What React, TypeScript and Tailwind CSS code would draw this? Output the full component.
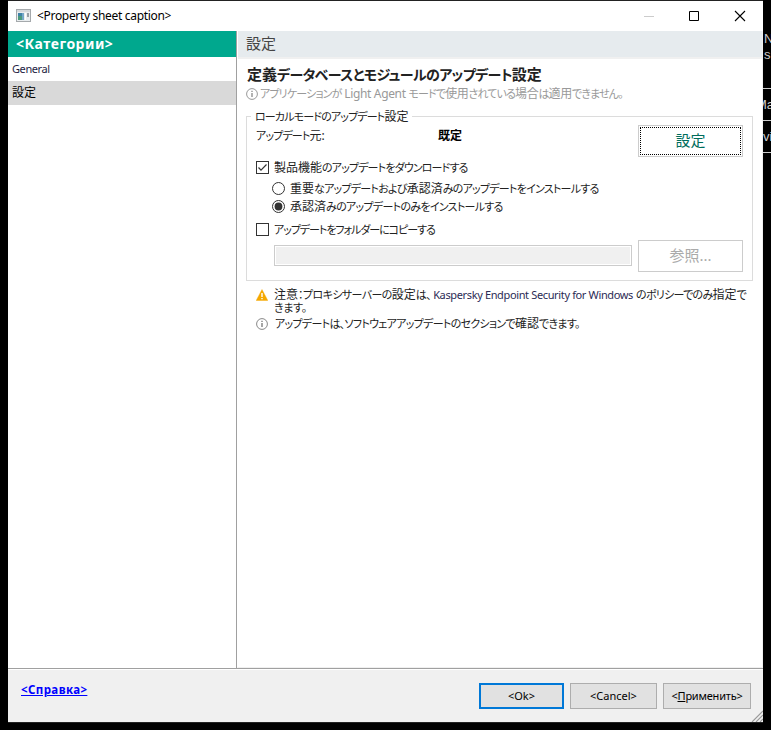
import React from 'react';
import clsx from 'clsx';

const InfoIcon: React.FC<{ className?: string }> = ({ className }) => (
  <svg className={clsx('h-3 w-3 shrink-0', className)} viewBox="0 0 12 12" fill="none">
    <circle cx="6" cy="6" r="5.4" stroke="currentColor" strokeWidth="1" />
    <path d="M5.25 5h1.5v4h-1.5zM5.25 2.8h1.5v1.3h-1.5z" fill="currentColor" />
  </svg>
);

const WarningIcon = () => (
  <svg className="h-3 w-3 shrink-0" viewBox="0 0 12 12">
    <path d="M6 .5 11.8 11.5H.2z" fill="#f5a800" stroke="#f5a800" strokeWidth=".4" strokeLinejoin="round" />
    <path d="M5.3 4h1.4v4H5.3zM5.3 8.9h1.4v1.3H5.3z" fill="#fff" />
  </svg>
);

const AppIcon = () => (
  <svg className="-mt-px h-[13px] w-[15px]" viewBox="0 0 15 13" shapeRendering="crispEdges">
    <path d="M0 0h15v13H0z" fill="#a5a9ac" />
    <path d="M1 1h13v11H1z" fill="#e9edef" />
    <path d="M1 1h13v2H1z" fill="#d5d9dc" />
    <path d="M2 4h6v7H2z" fill="#3f83a8" />
    <path d="M2 7h5v4H2z" fill="#4b9a7c" />
    <path d="M6 4h2v7H6z" fill="#74a8c8" />
    <path d="M9 4h1v7H9z" fill="#fff" />
    <path d="M11 4h2v4h-2z" fill="#98a0a6" />
  </svg>
);

// Kana is set proportionally and tight, kanji and latin keep their own advance.
const Ja: React.FC<{ children: string; className?: string; otherClassName?: string }> = ({
  children,
  className = 'text-[11px] tracking-[-0.85px]',
  otherClassName = 'tracking-normal',
}) => (
  <>
    {children.split(/([\u3000-\u30ff：]+)/).map((run, i) => (
      <span key={i} className={i % 2 ? clsx("[font-feature-settings:'palt']", className) : otherClassName}>
        {run}
      </span>
    ))}
  </>
);

interface OptionProps {
  type: 'checkbox' | 'radio';
  checked?: boolean;
  label: string;
  className?: string;
  textClassName?: string;
}

const Option: React.FC<OptionProps> = ({ type, checked, label, className, textClassName }) => (
  <div className={clsx('flex h-[18px] items-center', className)}>
    <svg className="-mt-px h-[13px] w-[13px] shrink-0" viewBox="0 0 13 13" fill="none" stroke="#333">
      {type === 'checkbox' ? (
        <>
          <rect x=".5" y=".5" width="12" height="12" />
          {checked && <path d="M2.5 6.5 5 9.2l5.5-5.7" strokeWidth="1.2" />}
        </>
      ) : (
        <>
          <circle cx="6.5" cy="6.5" r="6" />
          {checked && <circle cx="6.5" cy="6.5" r="3.9" fill="#333" stroke="none" />}
        </>
      )}
    </svg>
    <span className="ml-[5px] whitespace-nowrap">
      <Ja className={textClassName}>{label}</Ja>
    </span>
  </div>
);

const TitleBar = () => (
  <div className="flex h-[30px] items-center bg-white pl-2">
    <AppIcon />
    <span className="ml-[6px] text-[12px] tracking-[-0.32px] text-black">&lt;Property sheet caption&gt;</span>
    <svg className="mr-[16px] ml-auto h-3 w-[104px]" viewBox="0 0 104 12" fill="none">
      <path d="M1 6.5h10" stroke="#ccc" />
      <path d="M46.5 1.5h9v9h-9z" stroke="#000" />
      <path d="m92 1 10 10M102 1 92 11" stroke="#000" strokeWidth="1.1" />
    </svg>
  </div>
);

const Sidebar = () => (
  <div className="w-[229px] shrink-0 border-r border-[#a0a0a0] bg-white">
    <div className="flex h-[26px] items-center bg-[#00a88e] pb-px pl-2 text-[14px] font-bold tracking-[0.5px] text-white">
      &lt;Категории&gt;
    </div>
    <div className="flex h-6 items-center pl-1 text-[11px] tracking-[-0.4px] text-[#1d1d42]">General</div>
    <div className="flex h-6 items-center bg-[#d9d9d9] pl-1 text-[12px] text-black">設定</div>
  </div>
);

const SettingsPage = () => (
  <div className="flex min-w-0 flex-1 flex-col border-r border-b border-l border-[#f0f0f0] border-l-white bg-white text-[12px] text-[#222]">
    <div className="flex h-7 items-center border-b-2 border-[#f0f0f0] bg-[#e6ebee] pb-px pl-2 text-[15px] text-[#444]">
      設定
    </div>

    <h1 className="mt-[5px] mb-px ml-[9px] h-5 text-[15px] leading-5 font-semibold whitespace-nowrap">
      <Ja className="text-[14px] tracking-[-0.6px]">定義データベースとモジュールのアップデート設定</Ja>
    </h1>
    <div className="mt-px ml-2 flex h-4 items-center text-[#999]">
      <InfoIcon />
      <span className="ml-[2px] whitespace-nowrap">
        <Ja otherClassName="tracking-[-0.35px]">
          アプリケーションが Light Agent モードで使用されている場合は適用できません。
        </Ja>
      </span>
    </div>

    <div className="mt-[14px] ml-2 flex h-[165px] w-[507px] flex-col border border-[#dcdcdc]">
      <div className="-mt-2 ml-1 flex h-4 w-fit items-center bg-white px-1 whitespace-nowrap">
        <Ja>ローカルモードのアップデート設定</Ja>
      </div>
      <div className="flex h-8 pl-[9px]">
        <div className="w-[182px] pt-[2px] leading-[18px]">
          <Ja>アップデート元:</Ja>
        </div>
        <div className="pt-[2px] leading-[18px] font-bold text-black">既定</div>
        <button className="mr-[9px] ml-auto h-8 w-[105px] border border-[#ccc] bg-white p-px">
          <span className="flex h-full w-full items-center justify-center border border-dotted border-black pb-px text-[15px] text-[#006d5c]">
            設定
          </span>
        </button>
      </div>
      <Option
        type="checkbox"
        checked
        label="製品機能のアップデートをダウンロードする"
        className="mt-[2px] ml-[9px]"
      />
      <Option
        type="radio"
        label="重要なアップデートおよび承認済みのアップデートをインストールする"
        className="mt-[3px] ml-[25px]"
        textClassName="text-[11px] tracking-[-0.75px]"
      />
      <Option
        type="radio"
        checked
        label="承認済みのアップデートのみをインストールする"
        className="ml-[25px]"
        textClassName="text-[11px] tracking-[-0.7px]"
      />
      <Option
        type="checkbox"
        label="アップデートをフォルダーにコピーする"
        className="mt-[5px] ml-[9px]"
        textClassName="text-[11px] tracking-[-1.05px]"
      />
      <div className="mt-px flex items-center pl-[27px]">
        <div className="mb-px h-[21px] w-[358px] border border-[#ccc] bg-white p-px">
          <div className="h-full bg-[#f0f0f0]" />
        </div>
        <button className="ml-[6px] h-8 w-[105px] border border-[#ccc] bg-white pb-px text-[15px] text-[#aaa]">
          参照...
        </button>
      </div>
    </div>

    <div className="mt-[7px] ml-[18px] flex">
      <div className="pt-px">
        <WarningIcon />
      </div>
      <div className="ml-[6px] leading-[13px] whitespace-nowrap">
        <div className="flex h-[13px] items-center">
          <Ja className="text-[11px] tracking-[-0.6px]">注意：プロキシサーバーの設定は、</Ja>
          <span className="mr-[3px] ml-[2px] text-[11px] tracking-[-0.36px] text-[#2b2b55]">
            Kaspersky Endpoint Security for Windows
          </span>
          <Ja className="text-[11px] tracking-[-0.7px]">のポリシーでのみ指定で</Ja>
        </div>
        <div className="flex h-[13px] items-center">
          <Ja className="text-[11px] tracking-[-0.3px]">きます。</Ja>
        </div>
      </div>
    </div>
    <div className="mt-[2px] ml-[18px] flex h-4 items-center">
      <InfoIcon className="text-[#888]" />
      <span className="ml-[7px] whitespace-nowrap">
        <Ja className="text-[11px] tracking-[-0.7px]">
          アップデートは、ソフトウェアアップデートのセクションで確認できます。
        </Ja>
      </span>
    </div>
  </div>
);

const Footer = () => (
  <div className="relative flex h-[54px] border-t border-[#a0a0a0] bg-[#f0f0f0] text-[11px] text-black shadow-[inset_0_1px_#fff]">
    <a className="mt-[13px] ml-[13px] h-[15px] text-[11.5px] leading-[15px] font-bold tracking-[0.4px] text-[#0000ff] underline">
      &lt;Справка&gt;
    </a>
    <div className="mt-[14px] mr-3 ml-auto flex h-[26px] gap-[6px]">
      <button className="w-[85px] border-2 border-[#0078d7] bg-[#e1e1e1]">&lt;Ok&gt;</button>
      <button className="w-[87px] border border-[#adadad] bg-[#e1e1e1]">&lt;Cancel&gt;</button>
      <button className="w-[88px] border border-[#adadad] bg-[#e1e1e1] tracking-[-0.2px]">
        &lt;<u>П</u>рименить&gt;
      </button>
    </div>
    <svg className="absolute right-0 bottom-0 h-3 w-3" viewBox="0 0 12 12" stroke="#999" strokeWidth="1.1">
      <path d="M1 12 12 1M5 12l7-7M9 12l3-3" />
    </svg>
  </div>
);

const Backdrop = () => (
  <div className="flex w-2 flex-col overflow-hidden pt-[31px] font-['Liberation_Sans'] text-[13px] leading-4 whitespace-nowrap text-[#ccc]">
    <span className="pl-px">N</span>
    <span className="pl-px">s</span>
    <div className="mt-[25px] h-px bg-[#ccc]" />
    <div className="-ml-[7px] flex h-[31px] items-center">Ma</div>
    <div className="h-px bg-[#ccc]" />
    <div className="flex h-[31px] items-center">vi</div>
    <div className="h-px bg-[#ccc]" />
  </div>
);

const App: React.FC = () => (
  <div className="flex h-[730px] w-[771px] overflow-hidden bg-black pl-2 font-['Noto_Sans','Noto_Sans_CJK_JP',sans-serif]">
    <div className="flex h-[723px] w-[755px] flex-col border-y border-[#222]">
      <TitleBar />
      <div className="flex h-[637px]">
        <Sidebar />
        <SettingsPage />
      </div>
      <Footer />
    </div>
    <Backdrop />
  </div>
);

export default App;
